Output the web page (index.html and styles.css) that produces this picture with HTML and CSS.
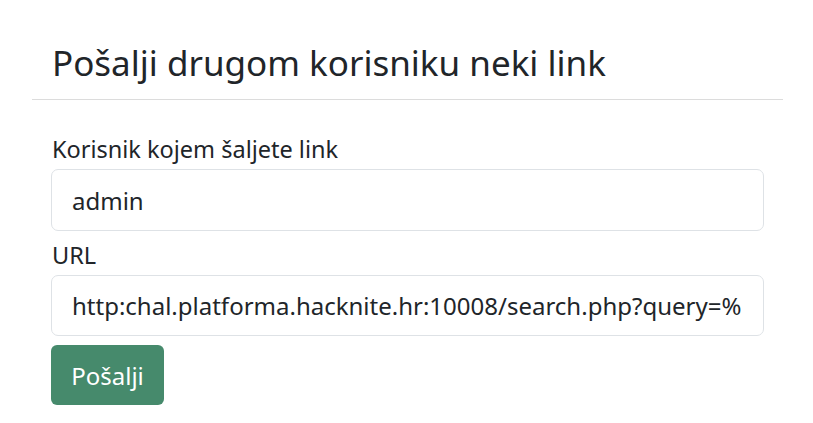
FILE: index.html
```html
<!DOCTYPE html>
<html lang="hr">
<head>
    <meta charset="UTF-8">
    <meta name="viewport" content="width=device-width, initial-scale=1.0">
    <title>Pošalji link</title>
    <link rel="stylesheet" href="styles.css">
</head>
<body>
    <!-- okvir s naslovom i formom -->
    <div class="panel">
        <div class="panel-header">
            <h3 class="panel-title">Pošalji drugom korisniku neki link</h3>
        </div>

        <form class="panel-body">
            <label class="form-label" for="user">Korisnik kojem šaljete link</label>
            <input class="form-input" id="user" type="text" value="admin">

            <label class="form-label label-url" for="url">URL</label>
            <input class="form-input" id="url" type="text" value="http:chal.platforma.hacknite.hr:10008/search.php?query=%">

            <button class="btn-send" type="button">Pošalji</button>
        </form>
    </div>
</body>
</html>
```

FILE: styles.css
```css
*{
    margin: 0;
    padding: 0;
    box-sizing: border-box;
}

body{
    background-color: #fff;
    color: #212529;
    font-family: "Noto Sans", Roboto, sans-serif;
}

.panel{
    width: 751px;
    margin-left: 32px;
}

.panel-header{
    padding: 41px 20px 15px;
    border-bottom: 1px solid #dcdcdc;
}

.panel-title{
    font-size: 35px;
    font-weight: 400;
    line-height: 43px;
}

.panel-body{
    display: flex;
    flex-direction: column;
    align-items: flex-start;
    padding: 33px 19px 0;
}

.form-label{
    font-size: 23.5px;
    line-height: 33px;
    padding-left: 1px;
    margin-bottom: 3px;
}

/* razmak izmedju prvog polja i drugog labela */
.label-url{
    margin-top: 8px;
}

.form-input{
    width: 100%;
    height: 62px;
    padding: 0 20px;
    border: 1px solid #dee2e6;
    border-radius: 7px;
    font-family: inherit;
    font-size: 24px;
    color: #212529;
    background-color: #fff;
    outline: none;
}

#url{
    height: 61px;
}

.btn-send{
    margin-top: 9px;
    width: 113px;
    height: 60px;
    border: none;
    border-radius: 6px;
    background-color: #468a6c;
    color: #fff;
    font-family: inherit;
    font-size: 24px;
    cursor: pointer;
}
```
